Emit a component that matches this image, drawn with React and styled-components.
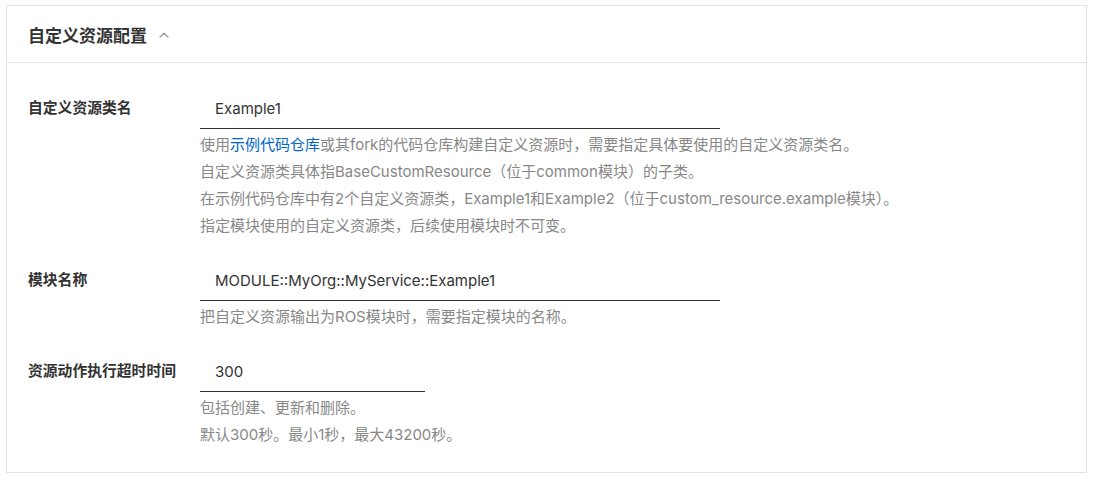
import React from 'react';
import styled, { createGlobalStyle } from 'styled-components';

const GlobalStyle = createGlobalStyle`
    body {
        margin: 0;
        background: #ffffff;
        font-family: "Inter", "Noto Sans CJK SC", sans-serif;
        color: #333333;
    }
`;

const Page = styled.div`
    padding: 5px 7px 9px 6px;
`;

const Card = styled.section`
    border: 1px solid #e3e3e3;
    background: #fff;
`;

const CardHeader = styled.div`
    display: flex;
    align-items: center;
    height: 56px;
    padding: 0 21px;
    border-bottom: 1px solid #e3e3e3;
`;

const Title = styled.h2`
    margin: 0;
    font-size: 17px;
    font-weight: 700;
    color: #333;
`;

const Toggle = styled.span`
    display: flex;
    align-items: center;
    margin-left: 12px;
    margin-top: 1px;
`;

const CardBody = styled.div`
    padding: 34px 21px 24px;
    display: flex;
    flex-direction: column;
    gap: 30px;
`;

const Row = styled.div`
    display: flex;
    align-items: flex-start;
`;

const Label = styled.label`
    width: 172px;
    flex: none;
    font-size: 14.8px;
    font-weight: 700;
    line-height: 23px;
    color: #333;
`;

const Field = styled.div`
    display: flex;
    flex-direction: column;
`;

const Input = styled.input`
    width: ${(p) => p.$width}px;
    box-sizing: border-box;
    height: 32px;
    padding: 0 15px 8px;
    border: none;
    border-bottom: 1px solid #333;
    outline: none;
    background: transparent;
    font-family: inherit;
    font-size: 15px;
    line-height: 23px;
    color: #333;
`;

const Help = styled.div`
    margin-top: 2px;
    font-size: 15px;
    line-height: 27px;
    color: #888;
`;

const Link = styled.a`
    color: #0064c8;
    text-decoration: none;
`;

function ChevronUp() {
    return (
        <svg width="10" height="6" viewBox="0 0 10 6" fill="none" xmlns="http://www.w3.org/2000/svg">
            <path d="M1 5L5 1.2L9 5" stroke="#999" strokeWidth="1.2" strokeLinecap="round" strokeLinejoin="round" />
        </svg>
    );
}

function FormRow({ label, value, width, children }) {
    return (
        <Row>
            <Label>{label}</Label>
            <Field>
                <Input $width={width} defaultValue={value} />
                <Help>{children}</Help>
            </Field>
        </Row>
    );
}

export default function App() {
    return (
        <>
            <GlobalStyle />
            <Page>
                <Card>
                    <CardHeader>
                        <Title>自定义资源配置</Title>
                        <Toggle><ChevronUp /></Toggle>
                    </CardHeader>
                    <CardBody>
                        <FormRow label="自定义资源类名" value="Example1" width={520}>
                            <div>使用<Link href="#">示例代码仓库</Link>或其fork的代码仓库构建自定义资源时，需要指定具体要使用的自定义资源类名。</div>
                            <div>自定义资源类具体指BaseCustomResource（位于common模块）的子类。</div>
                            <div>在示例代码仓库中有2个自定义资源类，Example1和Example2（位于custom_resource.example模块）。</div>
                            <div>指定模块使用的自定义资源类，后续使用模块时不可变。</div>
                        </FormRow>
                        <FormRow label="模块名称" value="MODULE::MyOrg::MyService::Example1" width={520}>
                            <div>把自定义资源输出为ROS模块时，需要指定模块的名称。</div>
                        </FormRow>
                        <FormRow label="资源动作执行超时时间" value="300" width={225}>
                            <div>包括创建、更新和删除。</div>
                            <div>默认300秒。最小1秒，最大43200秒。</div>
                        </FormRow>
                    </CardBody>
                </Card>
            </Page>
        </>
    );
}
